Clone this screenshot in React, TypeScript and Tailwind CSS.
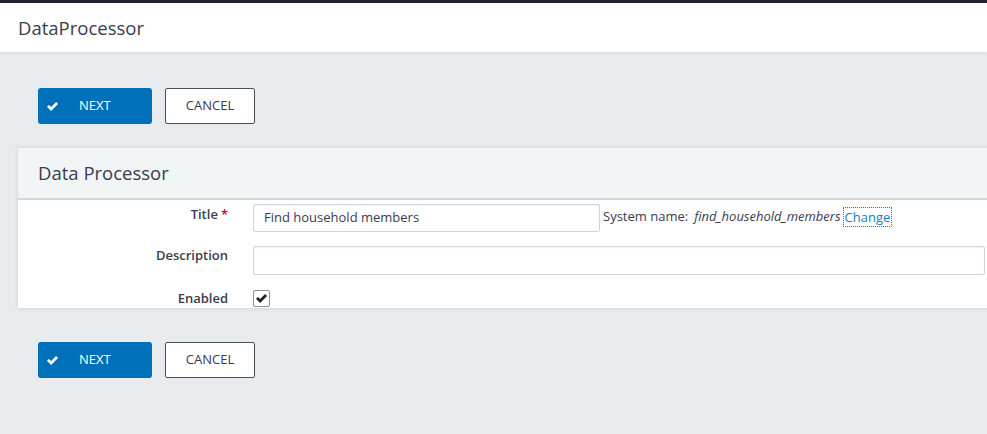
import React from 'react';

const font = { fontFamily: '"Open Sans", "Noto Sans", sans-serif' };

const CheckIcon = ({ className = '' }: { className?: string }) => (
    <svg viewBox="0 0 16 16" className={className} fill="currentColor">
        <path d="M1.2 8.4 L3.6 6 L6.3 8.7 L12.4 2.6 L14.8 5 L6.3 13.5 Z" />
    </svg>
);

const ActionBar = () => (
    <div className="flex items-center gap-[13px] pl-[38px]">
        <button className="flex items-center h-[36px] w-[114px] rounded-[3px] bg-[#0070ba] text-white text-[13px] pl-[8px]">
            <CheckIcon className="w-[13px] h-[13px]" />
            <span className="ml-[20px]">NEXT</span>
        </button>
        <button className="h-[36px] w-[90px] rounded-[2px] border border-[#4d4d5f] bg-white text-[#3a3a4c] text-[13px]">
            CANCEL
        </button>
    </div>
);

export default function App() {
    return (
        <div style={font} className="w-[987px] h-[434px] overflow-hidden bg-[#e7ebed] text-[#3b3b4f]">
            <div className="h-[3px] bg-[#1f2430]" />
            <div className="h-[49px] bg-white flex items-center pl-[18px] shadow-[0_1px_4px_rgba(0,0,0,0.08)]">
                <span className="text-[18.5px] text-[#3b3b4f]">DataProcessor</span>
            </div>

            <div className="pt-[36px]">
                <ActionBar />
            </div>

            <div className="ml-[18px] mt-[24px] w-[1000px] bg-white shadow-[0_0_4px_rgba(0,0,0,0.12)]">
                <div className="h-[52px] bg-[#f2f5f6] border-b-2 border-[#cfd8dd] flex items-center pl-[20px]">
                    <span className="text-[18.5px] text-[#3b3b4f]">Data Processor</span>
                </div>
                <div className="pt-[4px] pb-[1px]">
                    <div className="flex items-center h-[28px]">
                        <div className="w-[210px] text-right text-[13px] font-semibold -mt-[6px]">
                            Title<span className="text-[#d0021b] ml-[3px]">*</span>
                        </div>
                        <div className="w-[347px] ml-[25px] h-[28px] border border-[#cfd6db] rounded-[2px] flex items-center px-[10px] text-[13px] shadow-[inset_0_1px_2px_rgba(0,0,0,0.06)]">
                            Find household members
                        </div>
                        <div className="text-[13px] ml-[3px] flex items-center -mt-[3px]">
                            <span>System name:</span>
                            <span className="italic ml-[6px]">find_household_members</span>
                            <span className="ml-[2px] text-[#1a7bc4] border border-dotted border-[#1a7bc4] px-[1px] leading-[18px]">Change</span>
                        </div>
                    </div>
                    <div className="flex items-center h-[29px] mt-[14px]">
                        <div className="w-[210px] text-right text-[13px] font-semibold -mt-[9px]">Description</div>
                        <div className="w-[732px] ml-[25px] h-[29px] border border-[#cfd6db] rounded-[2px] shadow-[inset_0_1px_2px_rgba(0,0,0,0.06)]" />
                    </div>
                    <div className="flex items-center h-[17px] mt-[15px]">
                        <div className="w-[210px] text-right text-[13px] font-semibold">Enabled</div>
                        <div className="ml-[25px] w-[17px] h-[17px] border border-[#8a8f99] rounded-[2px] bg-white flex items-center justify-center">
                            <CheckIcon className="w-[13px] h-[13px] text-[#222]" />
                        </div>
                    </div>
                </div>
            </div>

            <div className="pt-[34px]">
                <ActionBar />
            </div>
        </div>
    );
}
